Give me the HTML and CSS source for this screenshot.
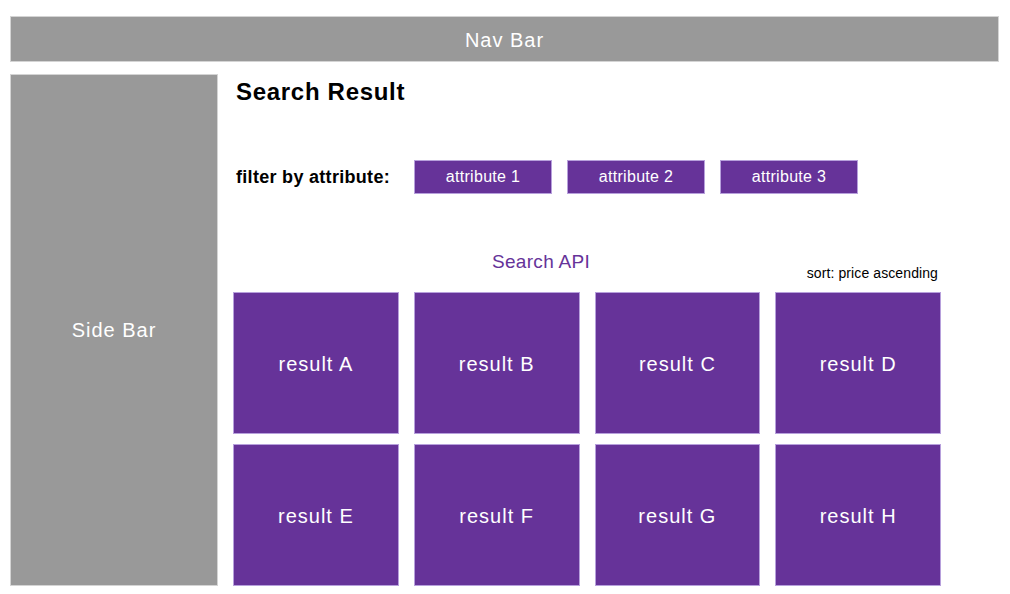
FILE: index.html
```html
<!DOCTYPE html>
<html>
<head>
<meta charset="utf-8">
<link rel="stylesheet" href="styles.css">
</head>
<body>
<div class="page">
  <header class="nav">Nav Bar</header>
  <div class="main">
    <aside class="side">Side Bar</aside>
    <section class="content">
      <h1 class="title">Search Result</h1>
      <div class="filter">
        <span class="filter-label">filter by attribute:</span>
        <div class="attrs">
          <span class="attr">attribute 1</span>
          <span class="attr">attribute 2</span>
          <span class="attr">attribute 3</span>
        </div>
      </div>
      <div class="api-row">
        <span class="api">Search API</span>
        <span class="sort">sort: price ascending</span>
      </div>
      <div class="grid">
        <div class="result">result A</div>
        <div class="result">result B</div>
        <div class="result">result C</div>
        <div class="result">result D</div>
        <div class="result">result E</div>
        <div class="result">result F</div>
        <div class="result">result G</div>
        <div class="result">result H</div>
      </div>
    </section>
  </div>
</div>
</body>
</html>
```
FILE: styles.css
```css
* { box-sizing: border-box; }
html, body { margin: 0; padding: 0; background: #fff; }
body { font-family: "Liberation Sans", Arial, sans-serif; color: #000; }

.page { padding: 16px 11px 0 10px; }

.nav {
  height: 46px;
  background: #999999;
  border: 1px solid #d4d4d4;
  color: #fff;
  font-size: 20px;
  letter-spacing: 1px;
  display: flex;
  align-items: center;
  justify-content: center;
  padding-top: 2px;
}

.main {
  display: flex;
  margin-top: 12px;
  gap: 15px;
}

.side {
  width: 208px;
  height: 512px;
  background: #999999;
  border: 1px solid #d4d4d4;
  color: #fff;
  font-size: 20px;
  letter-spacing: 1px;
  display: flex;
  align-items: center;
  justify-content: center;
}

.content {
  width: 708px;
  display: flex;
  flex-direction: column;
}

.title {
  margin: 4px 0 0 3px;
  font-size: 24px;
  line-height: 28px;
  font-weight: bold;
  letter-spacing: 0.7px;
}

.filter {
  margin-top: 54px;
  height: 34px;
  display: flex;
  align-items: center;
}

.filter-label {
  margin-left: 3px;
  width: 178px;
  font-size: 18px;
  font-weight: bold;
  letter-spacing: 0.3px;
}

.attrs {
  display: flex;
  gap: 15px;
}

.attr {
  width: 138px;
  height: 34px;
  background: #663399;
  border: 1px solid #b7a0dc;
  color: #fff;
  font-size: 16px;
  letter-spacing: 0.3px;
  display: flex;
  align-items: center;
  justify-content: center;
}

.api-row {
  margin-top: 57px;
  display: flex;
  align-items: flex-start;
  justify-content: space-between;
  padding-right: 3px;
}

.api {
  margin-left: 259px;
  font-size: 19px;
  line-height: 22px;
  letter-spacing: 0.3px;
  color: #663399;
}

.sort {
  margin-top: 14px;
  font-size: 14px;
  line-height: 16px;
  letter-spacing: 0.1px;
}

.grid {
  margin-top: 11px;
  display: grid;
  grid-template-columns: repeat(4, 1fr);
  column-gap: 15px;
  row-gap: 10px;
}

.result {
  height: 142px;
  background: #663399;
  border: 1px solid #b7a0dc;
  color: #fff;
  font-size: 20px;
  letter-spacing: 1px;
  display: flex;
  align-items: center;
  justify-content: center;
  padding-top: 2px;
}
```
